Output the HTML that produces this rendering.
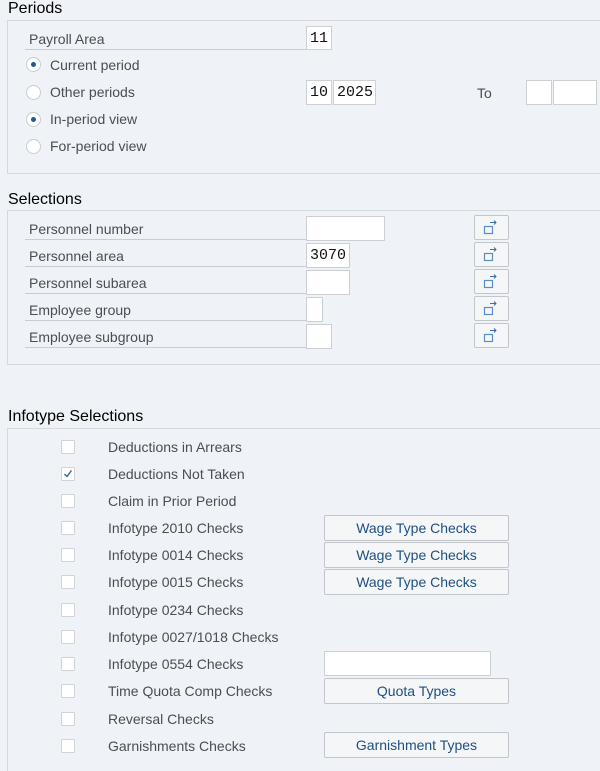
<!DOCTYPE html>
<html style="overflow:hidden;height:771px"><head><meta charset="utf-8"><style>
html,body{margin:0;overflow:hidden}
body{width:600px;height:771px;background:#eff3f8;font-family:"Liberation Sans",sans-serif;position:relative;color:#32363a}
div,span{position:absolute;box-sizing:border-box}
.t{font-size:16px;color:#000;}
.frame{border:1px solid #d5d9dd;}
.lbl{font-size:14px;color:#4a4e52;left:25px;width:281px;height:24px;line-height:26px;padding-left:4px;border-bottom:1px solid #c8cdd2}
.in{background:#fff;border:1px solid #ccd0d4;font-family:"Liberation Mono",monospace;font-size:15px;line-height:23px;padding-left:3px;color:#111}
.rad{width:15px;height:15px;border-radius:50%;border:1px solid #c8cdd2;background:#fff;left:26px}
.rad.on::after{content:"";position:absolute;left:4px;top:4px;width:5px;height:5px;border-radius:50%;background:#235a8c}
.rt{left:50px;font-size:14px;color:#4a4e52;line-height:16px}
.btn{background:#f5f6f7;border:1px solid #c2c6ca;border-radius:2px;left:474px;width:35px;height:25px}
.cb{left:61px;width:14px;height:14px;background:#fff;border:1px solid #d0d4d8;border-radius:1px}
.ct{left:108px;font-size:14px;color:#4a4e52;line-height:16px}
.wb{left:324px;width:185px;height:26px;background:#f5f6f7;border:1px solid #c2c6ca;border-radius:2px;text-align:center;font-size:14px;line-height:24px;color:#1f4f80}
</style></head><body>
<div class="t" style="left:8px;top:0px">Periods</div>
<div class="frame" style="left:7px;top:20px;width:600px;height:154px"></div>
<div class="lbl" style="top:26px">Payroll Area</div>
<div class="in" style="left:306px;top:26px;width:26px;height:24px">11</div>
<div class="rad on" style="top:57px"></div><div class="rt" style="top:57px">Current period</div>
<div class="rad" style="top:85px"></div><div class="rt" style="top:84px">Other periods</div>
<div class="in" style="left:306px;top:80px;width:26px;height:25px">10</div>
<div class="in" style="left:333px;top:80px;width:43px;height:25px">2025</div>
<div class="rt" style="left:477px;top:85px">To</div>
<div class="in" style="left:526px;top:80px;width:26px;height:25px"></div>
<div class="in" style="left:553px;top:80px;width:44px;height:25px"></div>
<div class="rad on" style="top:112px"></div><div class="rt" style="top:111px">In-period view</div>
<div class="rad" style="top:139px"></div><div class="rt" style="top:138px">For-period view</div>

<div class="t" style="left:8px;top:191px">Selections</div>
<div class="frame" style="left:7px;top:210px;width:600px;height:155px"></div>
<div class="lbl" style="top:216px">Personnel number</div>
<div class="lbl" style="top:243px">Personnel area</div>
<div class="lbl" style="top:270px">Personnel subarea</div>
<div class="lbl" style="top:297px">Employee group</div>
<div class="lbl" style="top:324px">Employee subgroup</div>
<div class="in" style="left:306px;top:216px;width:79px;height:25px"></div>
<div class="in" style="left:306px;top:243px;width:44px;height:25px">3070</div>
<div class="in" style="left:306px;top:270px;width:44px;height:25px"></div>
<div class="in" style="left:306px;top:297px;width:17px;height:25px"></div>
<div class="in" style="left:306px;top:324px;width:26px;height:25px"></div>
<div class="btn" style="top:215px"><svg width="35" height="25" style="position:absolute;left:0;top:0"><rect x="9.5" y="10.5" width="8" height="7" fill="none" stroke="#5b8fc2" stroke-width="1.2"/><path d="M15 6.5h6M19 4.5l2 2-2 2" fill="none" stroke="#3c6ea3" stroke-width="1"/></svg></div>
<div class="btn" style="top:242px"><svg width="35" height="25" style="position:absolute;left:0;top:0"><rect x="9.5" y="10.5" width="8" height="7" fill="none" stroke="#5b8fc2" stroke-width="1.2"/><path d="M15 6.5h6M19 4.5l2 2-2 2" fill="none" stroke="#3c6ea3" stroke-width="1"/></svg></div>
<div class="btn" style="top:269px"><svg width="35" height="25" style="position:absolute;left:0;top:0"><rect x="9.5" y="10.5" width="8" height="7" fill="none" stroke="#5b8fc2" stroke-width="1.2"/><path d="M15 6.5h6M19 4.5l2 2-2 2" fill="none" stroke="#3c6ea3" stroke-width="1"/></svg></div>
<div class="btn" style="top:296px"><svg width="35" height="25" style="position:absolute;left:0;top:0"><rect x="9.5" y="10.5" width="8" height="7" fill="none" stroke="#5b8fc2" stroke-width="1.2"/><path d="M15 6.5h6M19 4.5l2 2-2 2" fill="none" stroke="#3c6ea3" stroke-width="1"/></svg></div>
<div class="btn" style="top:323px"><svg width="35" height="25" style="position:absolute;left:0;top:0"><rect x="9.5" y="10.5" width="8" height="7" fill="none" stroke="#5b8fc2" stroke-width="1.2"/><path d="M15 6.5h6M19 4.5l2 2-2 2" fill="none" stroke="#3c6ea3" stroke-width="1"/></svg></div>

<div class="t" style="left:8px;top:408px">Infotype Selections</div>
<div class="frame" style="left:7px;top:428px;width:600px;height:343px;border-bottom:none"></div>

<div class="cb" style="top:440px"></div><div class="ct" style="top:439px">Deductions in Arrears</div>
<div class="cb" style="top:467px"><svg width="12" height="12" style="position:absolute;left:0;top:0"><path d="M2.5 6l2.5 2.5 4.5-6" fill="none" stroke="#2a5c8e" stroke-width="1.3"/></svg></div><div class="ct" style="top:466px">Deductions Not Taken</div>
<div class="cb" style="top:494px"></div><div class="ct" style="top:493px">Claim in Prior Period</div>
<div class="cb" style="top:521px"></div><div class="ct" style="top:520px">Infotype 2010 Checks</div>
<div class="wb" style="top:515px">Wage Type Checks</div>
<div class="cb" style="top:548px"></div><div class="ct" style="top:547px">Infotype 0014 Checks</div>
<div class="wb" style="top:542px">Wage Type Checks</div>
<div class="cb" style="top:575px"></div><div class="ct" style="top:574px">Infotype 0015 Checks</div>
<div class="wb" style="top:569px">Wage Type Checks</div>
<div class="cb" style="top:603px"></div><div class="ct" style="top:602px">Infotype 0234 Checks</div>
<div class="cb" style="top:630px"></div><div class="ct" style="top:629px">Infotype 0027/1018 Checks</div>
<div class="cb" style="top:657px"></div><div class="ct" style="top:656px">Infotype 0554 Checks</div>
<div class="in" style="left:324px;top:651px;width:167px;height:25px"></div>
<div class="cb" style="top:684px"></div><div class="ct" style="top:683px">Time Quota Comp Checks</div>
<div class="wb" style="top:678px">Quota Types</div>
<div class="cb" style="top:712px"></div><div class="ct" style="top:711px">Reversal Checks</div>
<div class="cb" style="top:739px"></div><div class="ct" style="top:738px">Garnishments Checks</div>
<div class="wb" style="top:732px">Garnishment Types</div>
</body></html>
